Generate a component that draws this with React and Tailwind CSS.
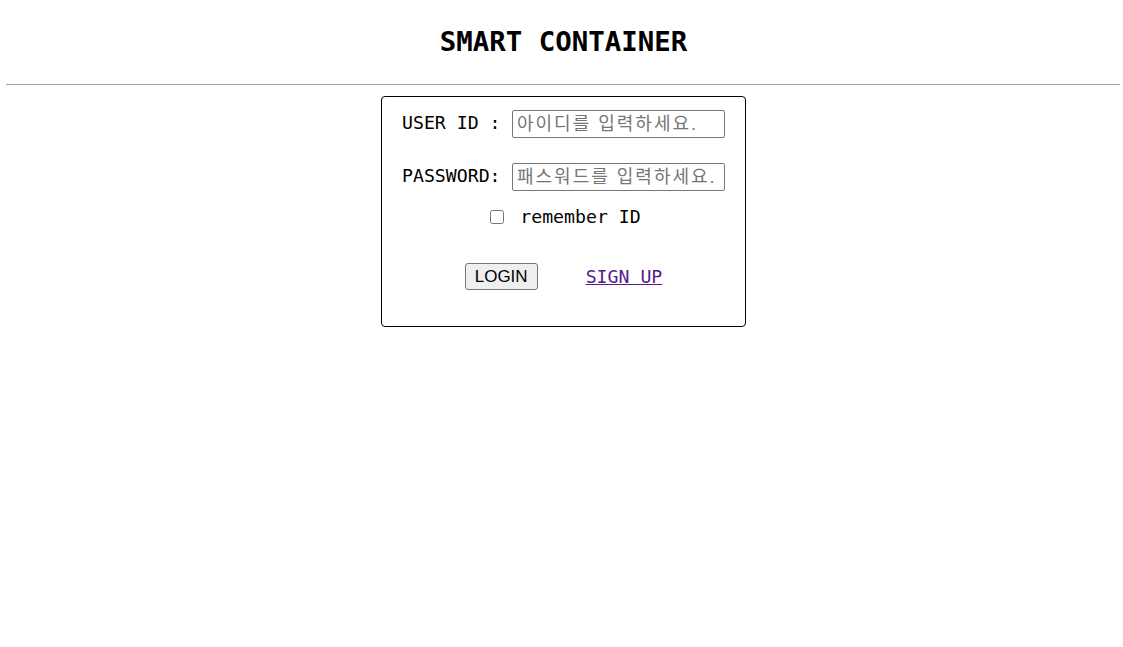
export default function App() {
  const mono = { fontFamily: '"DejaVu Sans Mono", monospace' };
  const field = { fontFamily: '"Liberation Sans", "Noto Sans CJK KR", sans-serif' };
  return (
    <div className="min-h-screen bg-white text-black" style={mono}>
      <header className="flex h-[84px] items-center justify-center pl-[4px]">
        <h1 className="text-[27.4px] font-bold leading-none">SMART CONTAINER</h1>
      </header>
      <hr className="ml-[6px] mr-[3px] border-t border-[#a0a0a0]" />
      <div className="mt-[11px] flex justify-center pl-[4px]">
        <form className="flex w-[365px] flex-col rounded-[4px] border border-black px-[20px] pt-[13px] pb-[36px] text-[18.2px]">
          <div className="flex h-[28px] items-center justify-between">
            <label className="w-[110px] whitespace-pre pb-[3px] leading-[22px]">USER ID :</label>
            <input
              type="text"
              placeholder="아이디를 입력하세요."
              className="h-[28px] w-[213px] rounded-[2px] border border-[#767676] px-[4px] text-[18px] leading-none tracking-[2px] placeholder:text-[#757575] outline-none"
              style={field}
            />
          </div>
          <div className="mt-[25px] flex h-[28px] items-center justify-between">
            <label className="w-[110px] whitespace-pre pb-[3px] leading-[22px]">PASSWORD:</label>
            <input
              type="password"
              placeholder="패스워드를 입력하세요."
              className="h-[28px] w-[213px] rounded-[2px] border border-[#767676] px-[4px] text-[18px] leading-none tracking-[2px] placeholder:text-[#757575] outline-none"
              style={field}
            />
          </div>
          <div className="mt-[12px] flex h-[27px] items-center justify-center gap-[16px] pl-[4px]">
            <input type="checkbox" className="h-[14px] w-[14px]" />
            <span className="leading-[22px]">remember ID</span>
          </div>
          <div className="mt-[33px] flex items-center justify-center gap-[48px]">
            <button
              type="button"
              className="h-[27px] w-[73px] rounded-[3px] border border-[#767676] bg-[#efefef] text-[17px] leading-none"
              style={{ fontFamily: '"Liberation Sans", Arial, sans-serif' }}
            >
              LOGIN
            </button>
            <a href="#" className="leading-[22px] text-[#551a8b] underline">
              SIGN UP
            </a>
          </div>
        </form>
      </div>
    </div>
  );
}
